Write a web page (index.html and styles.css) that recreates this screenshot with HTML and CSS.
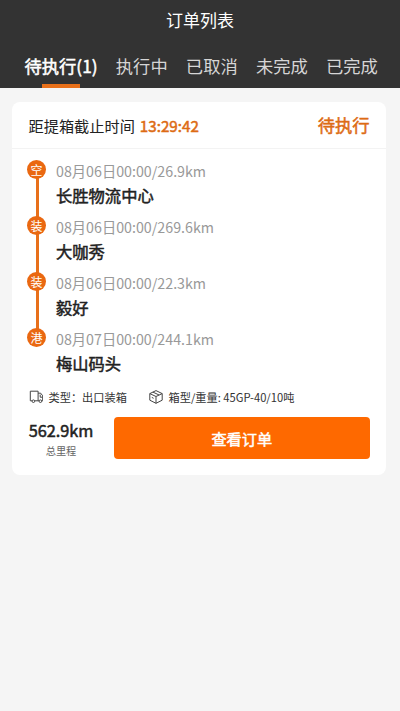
FILE: index.html
```html
<!DOCTYPE html>
<html lang="zh-CN">
<head>
<meta charset="utf-8">
<title>订单列表</title>
<link rel="stylesheet" href="styles.css">
</head>
<body>
<header class="header">
  <h1 class="title">订单列表</h1>
  <nav class="tabs">
    <a class="tab active">待执行(1)</a>
    <a class="tab">执行中</a>
    <a class="tab">已取消</a>
    <a class="tab">未完成</a>
    <a class="tab">已完成</a>
  </nav>
</header>
<main class="card">
  <div class="card-head">
    <span class="deadline">距提箱截止时间</span>
    <span class="countdown">13:29:42</span>
    <span class="status">待执行</span>
  </div>
  <ol class="route">
    <li class="stop"><span class="dot">空</span><div><div class="when">08月06日00:00/26.9km</div><div class="place">长胜物流中心</div></div></li>
    <li class="stop"><span class="dot">装</span><div><div class="when">08月06日00:00/269.6km</div><div class="place">大咖秀</div></div></li>
    <li class="stop"><span class="dot">装</span><div><div class="when">08月06日00:00/22.3km</div><div class="place">毅好</div></div></li>
    <li class="stop"><span class="dot">港</span><div><div class="when">08月07日00:00/244.1km</div><div class="place">梅山码头</div></div></li>
  </ol>
  <div class="meta">
    <div class="meta-item type">
      <svg class="icon" viewBox="0 0 14 14"><path d="M3 10.8H1.3V1.2h7.8v9.6H5.8M9.1 3.2h2.6l2 2.6v5h-.9M9.1 10.8h1M11.2 4.6v2.6h2.4"/><circle cx="4.4" cy="11.2" r="1.3"/><circle cx="11.4" cy="11.2" r="1.3"/></svg>
      <span>类型：出口装箱</span>
    </div>
    <div class="meta-item">
      <svg class="icon" viewBox="0 0 14 14"><path d="M7 .6l6.2 3v6.6L7 13.3.8 10.2V3.6zM.8 3.6L7 6.5l6.2-2.9M7 6.5v6.8M3.9 2.1l6.2 2.9M2.8 7.4l1.8.9"/></svg>
      <span>箱型/重量: 45GP-40/10吨</span>
    </div>
  </div>
  <div class="footer">
    <div class="total">
      <div class="distance">562.9km</div>
      <div class="label">总里程</div>
    </div>
    <button class="button">查看订单</button>
  </div>
</main>
</body>
</html>
```
FILE: styles.css
```css
* { box-sizing: border-box; }
body {
  margin: 0;
  min-height: 711px;
  background: #f5f5f5;
  color: #222;
  font-family: "Noto Sans CJK SC", sans-serif;
}
.header {
  height: 88px;
  background: #333;
  color: #fff;
}
.title {
  margin: 0;
  height: 43px;
  line-height: 40px;
  text-align: center;
  font-size: 17px;
  font-weight: 400;
}
.tabs {
  display: flex;
  height: 45px;
  padding-left: 24.5px;
  gap: 18.2px;
}
.tab {
  position: relative;
  line-height: 45px;
  font-size: 17.3px;
  color: #d6d6d6;
  white-space: nowrap;
}
.tab.active {
  color: #fff;
}
.tab.active,
.countdown,
.status,
.place,
.distance,
.button {
  -webkit-text-stroke: 0.5px currentColor;
}
.tab.active::after {
  content: "";
  position: absolute;
  left: 50%;
  bottom: 0;
  width: 38px;
  height: 4px;
  margin-left: -19px;
  background: #e8701a;
}
.card {
  margin: 14px 14px 0 12px;
  height: 373px;
  border-radius: 8px;
  background: #fff;
}
.card-head {
  display: flex;
  align-items: center;
  height: 47px;
  padding: 0 16.5px 1px;
  border-bottom: 1px solid #f3f3f3;
  font-size: 15.2px;
}
.countdown {
  margin-left: 5px;
  color: #dd6b14;
}
.status {
  margin-left: auto;
  color: #dd6b14;
  font-size: 17.3px;
}
.route {
  list-style: none;
  margin: 0;
  padding: 11px 16px 0 15px;
}
.stop {
  position: relative;
  display: flex;
  gap: 10px;
  height: 56px;
}
.stop:not(:last-child)::before {
  content: "";
  position: absolute;
  left: 9px;
  top: 10px;
  width: 3px;
  height: 56px;
  background: #e8701a;
}
.dot {
  position: relative;
  z-index: 1;
  width: 19px;
  height: 19px;
  border-radius: 50%;
  background: #ea6811;
  color: #fff;
  font-size: 12px;
  line-height: 19px;
  text-align: center;
}
.when {
  line-height: 22px;
  font-size: 14.25px;
  color: #999;
}
.place {
  margin-top: 1px;
  line-height: 24px;
  font-size: 16.3px;
}
.meta {
  display: flex;
  height: 32px;
  padding: 4px 16px 0 17px;
  font-size: 11.2px;
  color: #333;
}
.meta-item {
  display: flex;
  align-items: center;
  gap: 5.5px;
  height: 18px;
  line-height: 18px;
  white-space: nowrap;
}
.type { width: 120px; }
.icon {
  width: 14px;
  height: 14px;
  fill: none;
  stroke: #444;
  stroke-width: 1;
  stroke-linejoin: round;
}
.footer {
  display: flex;
  padding: 1px 16px 0;
}
.total {
  width: 66px;
  text-align: center;
}
.distance {
  line-height: 26px;
  font-size: 16.3px;
}
.label {
  line-height: 16px;
  font-size: 10.2px;
  color: #666;
}
.button {
  flex: 1;
  height: 42px;
  margin-left: 19.5px;
  padding: 0 0 1px;
  border: 0;
  border-radius: 4px;
  background: #fe6900;
  color: #fff;
  font: 400 15.2px "Noto Sans CJK SC", sans-serif;
}
```
